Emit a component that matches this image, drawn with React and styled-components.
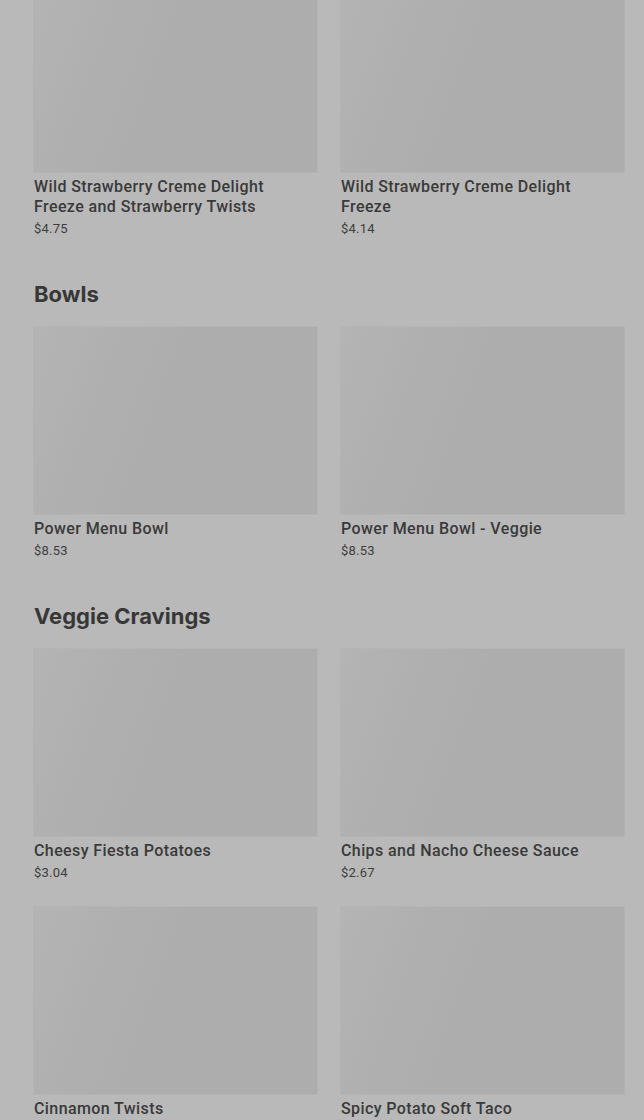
import React from "react";
import styled, { createGlobalStyle } from "styled-components";

const Global = createGlobalStyle`
  html, body { margin: 0; padding: 0; background: #b9b9b9; }
  body { font-family: Roboto, "Noto Sans", sans-serif; overflow: hidden; }
`;

const Page = styled.main`
  width: 644px;
  height: 1120px;
  overflow: hidden;
  background: #b9b9b9;
  box-sizing: border-box;
  padding: 0 20px 0 34px;
`;

const Scroller = styled.div`
  margin-top: -15px;
  display: flex;
  flex-direction: column;
  gap: 42px;
`;

const Section = styled.section`
  display: flex;
  flex-direction: column;
  gap: 19px;
`;

const Heading = styled.h2`
  margin: 0;
  font-family: Inter, "Noto Sans", sans-serif;
  font-weight: 700;
  font-size: 22px;
  line-height: 28px;
  letter-spacing: 0;
  color: #373737;
`;

const Grid = styled.div`
  display: grid;
  grid-template-columns: 283px 283px;
  column-gap: 24px;
  row-gap: 25px;
`;

const Card = styled.article`
  display: flex;
  flex-direction: column;
`;

const Thumb = styled.div`
  height: 187px;
  background: linear-gradient(110deg, #b4b4b4 0%, #b0b0b0 22%, #adadad 45%, #adadad 100%);
  box-shadow: 0 0 0 1px rgba(0, 0, 0, 0.025);
`;

const Title = styled.h3`
  margin: 5px 0 0;
  font-family: Roboto, "Noto Sans", sans-serif;
  font-weight: 500;
  font-size: 16px;
  line-height: 20px;
  letter-spacing: 0.4px;
  color: #3a3a3a;
  padding-right: 20px;
`;

const Price = styled.div`
  margin-top: 3px;
  font-family: Roboto, "Noto Sans", sans-serif;
  font-size: 13px;
  line-height: 18px;
  letter-spacing: 0.2px;
  color: #3e3e3e;
`;

const sections = [
  {
    name: null,
    items: [
      { t: "Wild Strawberry Creme Delight Freeze and Strawberry Twists", p: "$4.75" },
      { t: "Wild Strawberry Creme Delight Freeze", p: "$4.14" },
    ],
  },
  {
    name: "Bowls",
    items: [
      { t: "Power Menu Bowl", p: "$8.53" },
      { t: "Power Menu Bowl - Veggie", p: "$8.53" },
    ],
  },
  {
    name: "Veggie Cravings",
    items: [
      { t: "Cheesy Fiesta Potatoes", p: "$3.04" },
      { t: "Chips and Nacho Cheese Sauce", p: "$2.67" },
      { t: "Cinnamon Twists", p: "$1.49" },
      { t: "Spicy Potato Soft Taco", p: "$1.89" },
    ],
  },
];

export default function App() {
  return (
    <>
      <Global />
      <Page>
        <Scroller>
          {sections.map((s, i) => (
            <Section key={i}>
              {s.name && <Heading>{s.name}</Heading>}
              <Grid>
                {s.items.map((it) => (
                  <Card key={it.t}>
                    <Thumb />
                    <Title>{it.t}</Title>
                    <Price>{it.p}</Price>
                  </Card>
                ))}
              </Grid>
            </Section>
          ))}
        </Scroller>
      </Page>
    </>
  );
}
